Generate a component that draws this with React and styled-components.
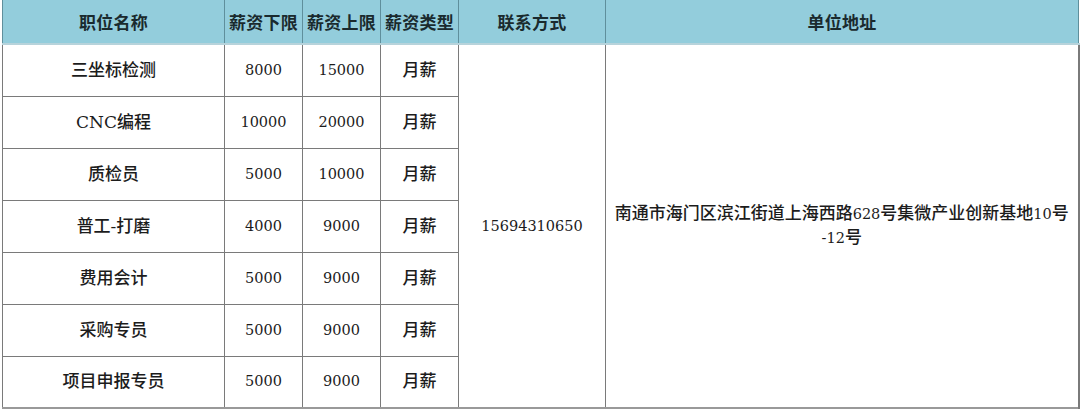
import React from "react";
import styled, { createGlobalStyle } from "styled-components";

const Global = createGlobalStyle`
  html, body { margin: 0; padding: 0; background: #ffffff; }
  body { font-family: "DejaVu Serif", "Noto Sans CJK SC", serif; color: #1c1c1c; }
`;

const Page = styled.div`
  width: 1080px;
  height: 409px;
  overflow: hidden;
  background: #fff;
  padding-left: 2px;
  box-sizing: border-box;
`;

const Table = styled.table`
  width: 1076px;
  border-collapse: collapse;
  table-layout: fixed;
  border-bottom: 2px solid #999;
`;

const HeadRow = styled.tr`
  height: 44px;
  background: #93cddc;
`;

const HeadCell = styled.th`
  padding: 0;
  border-left: 1px solid #5f8f9c;
  border-right: 1px solid #5f8f9c;
  border-bottom: 2px solid #b7d3db;
  font-family: "Liberation Serif", "Noto Sans CJK SC", serif;
  font-size: 17px;
  font-weight: 700;
  color: #1a2a2e;
  text-align: center;
  vertical-align: middle;
  letter-spacing: 0.3px;
`;

const Row = styled.tr`
  height: 52px;
`;

const Cell = styled.td`
  padding: 0 2px;
  border: 1px solid #7a7a7a;
  border-right-width: ${(p) => (p.$last ? "2px" : "1px")};
  font-family: "DejaVu Serif", "Noto Sans CJK SC", serif;
  font-size: ${(p) => (p.$num ? "14.5px" : "17px")};
  font-weight: 500;
  color: #1c1c1c;
  text-align: center;
  vertical-align: middle;
  line-height: 23px;
`;

const Digits = styled.span`
  font-family: "DejaVu Serif", serif;
  font-size: 14.5px;
`;

const cols = [222, 78, 78, 78, 147, 473];
const headers = ["职位名称", "薪资下限", "薪资上限", "薪资类型", "联系方式", "单位地址"];
const rows = [
  ["三坐标检测", "8000", "15000", "月薪"],
  ["CNC编程", "10000", "20000", "月薪"],
  ["质检员", "5000", "10000", "月薪"],
  ["普工-打磨", "4000", "9000", "月薪"],
  ["费用会计", "5000", "9000", "月薪"],
  ["采购专员", "5000", "9000", "月薪"],
  ["项目申报专员", "5000", "9000", "月薪"],
];

export default function App() {
  return (
    <Page>
      <Global />
      <Table>
        <colgroup>
          {cols.map((w, i) => (
            <col key={i} style={{ width: w }} />
          ))}
        </colgroup>
        <thead>
          <HeadRow>
            {headers.map((h) => (
              <HeadCell key={h}>{h}</HeadCell>
            ))}
          </HeadRow>
        </thead>
        <tbody>
          {rows.map((r, i) => (
            <Row key={i}>
              <Cell>{r[0]}</Cell>
              <Cell $num>{r[1]}</Cell>
              <Cell $num>{r[2]}</Cell>
              <Cell>{r[3]}</Cell>
              {i === 0 && (
                <>
                  <Cell $num rowSpan={rows.length}>15694310650</Cell>
                  <Cell rowSpan={rows.length} $last>
                    南通市海门区滨江街道上海西路<Digits>628</Digits>号集微产业创新基地<Digits>10</Digits>号
                    <br />
                    <Digits>-12</Digits>号
                  </Cell>
                </>
              )}
            </Row>
          ))}
        </tbody>
      </Table>
    </Page>
  );
}
